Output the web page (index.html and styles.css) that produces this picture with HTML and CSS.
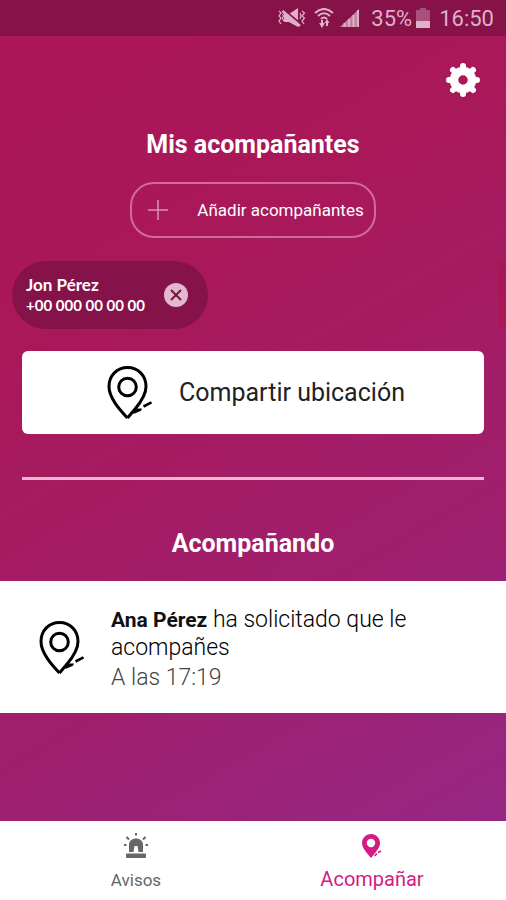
FILE: index.html
```html
<!DOCTYPE html>
<html lang="es">
<head>
<meta charset="utf-8">
<meta name="viewport" content="width=device-width, initial-scale=1">
<title>Acompañar</title>
<link rel="stylesheet" href="styles.css">
</head>
<body>
<svg class="defs" aria-hidden="true">
  <symbol id="pin" viewBox="0 0 46 56">
    <g fill="none" stroke="currentColor" stroke-width="3">
      <path d="M20.500 53C13 45 2 33 2 21.500C2 10.500 10 2.500 20.500 2.500S39 10.500 39 21.500C39 29 34 37 28 44L20.500 53"/>
      <circle cx="20.500" cy="22" r="8.800"/>
      <path d="M36.500 41.500L44.500 37.300" stroke-width="2.600"/>
    </g>
    <path d="M26 46L29.500 43.500L35 43.500L34 45.800L26.500 49Z" fill="currentColor"/>
  </symbol>
</svg>
<div class="app">
  <div class="status">
    <svg class="mute" viewBox="0 0 28 20" aria-hidden="true">
      <path d="M6 6H11L20 0V19L11 14H6Z" fill="currentColor"/>
      <path d="M6 2L23 16" stroke="#861247" stroke-width="2"/>
      <path d="M4.500 3L22 18" stroke="currentColor" stroke-width="2.500"/>
      <path d="M1 3L3 5L1 8L3 10L1 13L3 16M4.500 6L5.500 8L4.500 10L5.500 13M24 3L26.500 5L24 8L26.500 10L24 13L26 16M22 5L23 8L22 11" fill="none" stroke="currentColor" stroke-width="1.200"/>
    </svg>
    <svg class="wifi" viewBox="0 0 20 20" aria-hidden="true">
      <g fill="none" stroke="currentColor" stroke-width="2">
        <path d="M1 5Q10 -3 19 5M4 8Q10 2.500 16 8M7 11Q10 8 13 11"/>
      </g>
      <path d="M7 12V15H5L8 20L11 15H9V12ZM13 11L10.500 15H12V18H14V15H15.500Z" fill="currentColor"/>
    </svg>
    <svg class="signal" viewBox="0 0 20 20" aria-hidden="true">
      <path d="M0 19L19 1V19Z" fill="currentColor" opacity=".7"/>
      <path d="M4.500 19V15M9 19V11M13.500 19V7M18 19V2" stroke="currentColor" stroke-width="2"/>
    </svg>
    <span class="percent">35%</span>
    <svg class="battery" viewBox="0 0 14 20" aria-hidden="true">
      <path d="M0 2H4V0H10V2H14V13H0Z" fill="currentColor" opacity=".4"/>
      <path d="M0 13H14V20H0Z" fill="currentColor"/>
    </svg>
    <span class="clock">16:50</span>
  </div>
  <main>
    <div class="toolbar">
      <button class="gear" type="button" aria-label="Ajustes">
        <svg viewBox="-17 -17 34 34" aria-hidden="true">
          <g fill="none" stroke="currentColor">
            <circle r="9" stroke-width="8.500"/>
            <path d="M0 -13V-14M0 13V14M-13 0H-14M13 0H14M-9 -9L-10 -10M9 9L10 10M9 -9L10 -10M-9 9L-10 10" stroke-width="6" stroke-linecap="round"/>
          </g>
        </svg>
      </button>
    </div>
    <h2 class="mine">Mis acompañantes</h2>
    <button class="add" type="button">
      <svg viewBox="0 0 20 20" aria-hidden="true"><path d="M10 0V20M0 10H20" stroke="currentColor" stroke-width="1.500"/></svg>
      <span>Añadir acompañantes</span>
    </button>
    <div class="people">
      <div class="chip">
        <div><div class="name">Jon Pérez</div><div>+00 000 00 00 00</div></div>
        <button type="button" aria-label="Quitar a Jon Pérez">
          <svg viewBox="0 0 24 24" aria-hidden="true"><circle cx="12" cy="12" r="12" fill="#e1b8cd"/><path d="M7 7L17 17M17 7L7 17" stroke="#74123f" stroke-width="1.800"/></svg>
        </button>
      </div>
      <div class="edge"></div>
    </div>
    <button class="share" type="button">
      <svg class="pin" aria-hidden="true"><use href="#pin"/></svg>
      <span>Compartir ubicación</span>
    </button>
    <hr>
    <h2 class="following">Acompañando</h2>
    <article class="request">
      <svg class="pin" aria-hidden="true"><use href="#pin"/></svg>
      <div>
        <p><strong>Ana Pérez</strong> ha solicitado que le acompañes</p>
        <time>A las 17:19</time>
      </div>
    </article>
  </main>
  <nav>
    <a href="#avisos">
      <svg class="siren" viewBox="0 0 26 26" aria-hidden="true">
        <path fill-rule="evenodd" d="M6 19V12C6 8 9 5.500 13 5.500S20 8 20 12V19ZM10.500 19H15.500L14.500 13H11.500Z" fill="currentColor"/>
        <rect x="3" y="20.500" width="20" height="4.500" rx="1" fill="currentColor"/>
        <path d="M13 0V2.500M3.500 4L6 6.500M22.500 4L20 6.500M1 12H3.500M22.500 12H25" stroke="currentColor" stroke-width="2"/>
      </svg>
      <span>Avisos</span>
    </a>
    <a class="active" href="#acompanar" aria-current="page">
      <svg class="place" viewBox="0 0 20 24" aria-hidden="true">
        <path fill-rule="evenodd" d="M9 24C5 19 0 14 0 9C0 4 4 0 9 0S18 4 18 9C18 14 13 19 9 24ZM9 4.800A4.200 4.200 0 1 0 9 13.200A4.200 4.200 0 1 0 9 4.800Z" fill="currentColor"/>
        <path d="M12.500 22L15 19.500M16 18.500L19 17" stroke="currentColor" stroke-width="1.500"/>
      </svg>
      <span>Acompañar</span>
    </a>
  </nav>
</div>
</body>
</html>
```
FILE: styles.css
```css
* { box-sizing: border-box; }
body { margin: 0; font-family: Roboto, sans-serif; }
button { font: inherit; color: inherit; background: none; border: 0; padding: 0; cursor: pointer; }
svg { display: block; flex: none; }
h2, p { margin: 0; }
.defs { position: absolute; width: 0; height: 0; }
.app {
  min-height: 100vh;
  display: flex;
  flex-direction: column;
  color: #fff;
  background: linear-gradient(150deg, #ab1656 0%, #a91859 30%, #a01f6d 65%, #93298a 100%);
}
.status {
  height: 36px;
  padding: 0 12px;
  display: flex;
  align-items: center;
  justify-content: flex-end;
  color: #dfb0c7;
  background: #861247;
  font-size: 22px;
}
.mute { width: 28px; height: 20px; margin-right: 8px; }
.wifi { width: 20px; height: 20px; margin-right: 6px; }
.signal { width: 20px; height: 20px; margin-right: 11px; }
.battery { width: 14px; height: 20px; margin: 0 9px 0 4px; }
main { flex: 1; display: flex; flex-direction: column; }
.toolbar { display: flex; justify-content: flex-end; padding: 27px 26px 0; }
.gear svg { width: 34px; height: 34px; }
h2 { font-size: 25px; line-height: 32px; font-weight: 700; text-align: center; }
.mine { margin-top: 32px; }
.add {
  align-self: center;
  display: flex;
  align-items: center;
  gap: 29px;
  height: 56px;
  margin-top: 21px;
  padding: 0 10px 0 16px;
  border: 2px solid #cf6c9b;
  border-radius: 24px;
  font-size: 17px;
  font-weight: 400;
}
.add svg { width: 20px; height: 20px; color: #dc91b3; }
.people { display: flex; justify-content: space-between; margin-top: 23px; padding-left: 12px; }
.chip {
  display: flex;
  align-items: center;
  gap: 19px;
  height: 68px;
  padding: 0 20px 0 14px;
  border-radius: 34px;
  background: #851349;
  font-family: Lato, sans-serif;
  font-size: 15px;
  line-height: 21px;
  font-weight: 700;
}
.name { font-size: 17px; }
.chip svg { width: 24px; height: 24px; }
.edge { width: 8px; background: #a81758; }
.share {
  display: flex;
  align-items: center;
  justify-content: center;
  gap: 26px;
  height: 83px;
  margin: 22px 22px 0;
  padding-left: 6px;
  border-radius: 6px;
  background: #fff;
  color: #222;
  font-size: 25px;
}
.pin { width: 46px; height: 56px; color: #000; }
hr { align-self: stretch; height: 3px; margin: 43px 22px 0; border: 0; background: #eab8d2; }
.following { margin-top: 48px; }
.request {
  display: flex;
  align-items: center;
  gap: 26px;
  min-height: 132px;
  margin-top: 21px;
  padding: 2px 80px 0 39px;
  background: #fff;
  color: #000;
  font-size: 23px;
  line-height: 27px;
  font-weight: 300;
}
.request strong { font-size: 21px; font-weight: 700; color: #111; }
.request time { display: block; margin-top: 3px; color: #444; }
nav { display: grid; grid-template-columns: 1fr 1fr; padding: 2px 16px 0 18px; height: 79px; background: #fff; color: #666; }
nav a {
  display: flex;
  flex-direction: column;
  align-items: center;
  justify-content: center;
  gap: 8px;
  color: inherit;
  text-decoration: none;
  font-size: 17px;
  line-height: 22px;
}
nav a span { padding-top: 2px; }
nav .active { color: #d41a84; font-size: 20px; }
.siren { width: 26px; height: 26px; }
.place { width: 20px; height: 24px; }
```
